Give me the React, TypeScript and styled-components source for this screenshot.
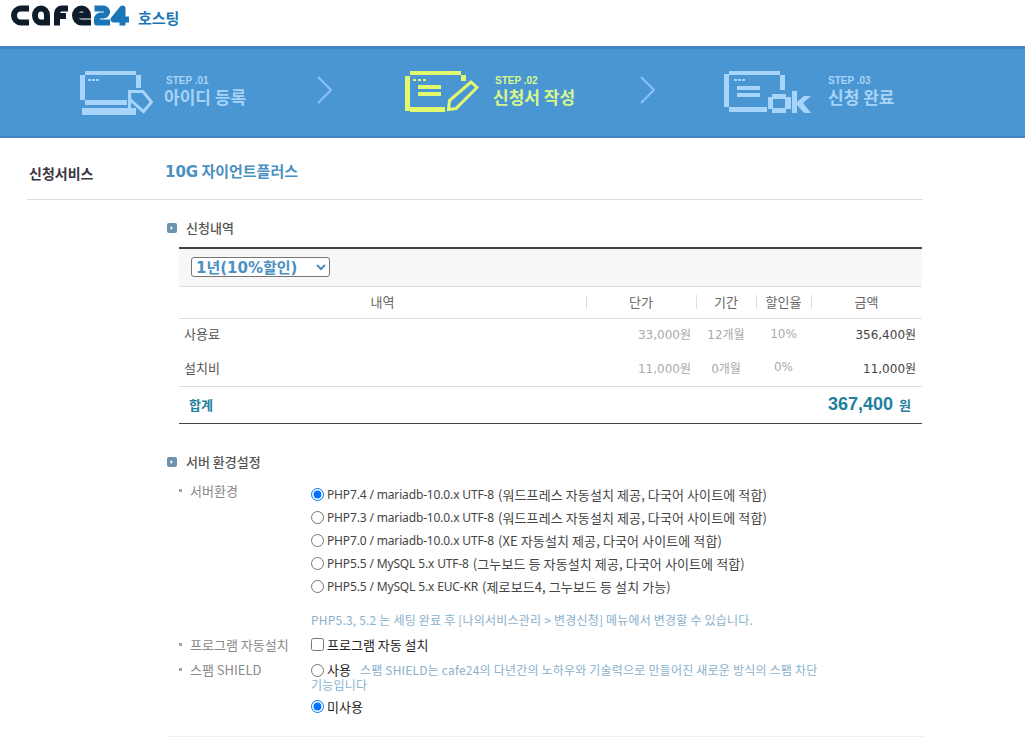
import styled, { createGlobalStyle } from "styled-components";

const KR = `"Noto Sans CJK KR", "Noto Sans", sans-serif`;
const LATIN = `"DejaVu Sans", "Noto Sans CJK KR", sans-serif`;

const GlobalStyle = createGlobalStyle`
	html, body {
		margin: 0;
		padding: 0;
		background: #fff;
		font-family: ${KR};
		font-size: 13px;
		color: #555;
	}
`;

const blueIcon = "#a6d4fb";
const limeIcon = "#e2fb6e";

const Logo = () => (
	<svg width={118} height={22} viewBox="11 5 118 22" fill="none" strokeWidth={6}>
		<g stroke="#0f1c2b">
			<path d="M29 8.500H21A7 7 0 0 0 21 22.500H29" />
			<path d="M47 25.500V15.500A6 7 0 0 0 35 15.500A6 7 0 0 0 41 22.500H47" />
			<path d="M68 8.500H62A5 5 0 0 0 57 13.500V25.500M54 16H66" />
			<path d="M75 15.500H88A6.500 7 0 0 0 75 15.500A6.500 7 0 0 0 81.500 22.500H91" />
		</g>
		<g stroke="#1a76b8" strokeLinejoin="round">
			<path d="M94.500 8.500H103.500A3.500 3.500 0 0 1 103.500 15.500H100.500A3.500 3.500 0 0 0 97 19V22.500H110" />
			<path d="M122.500 25.500V8.500L113.500 19.500H129" />
		</g>
	</svg>
);

const AccountIcon = () => (
	<svg width={73} height={44} viewBox="0 0 73 44" fill={blueIcon} shapeRendering="crispEdges">
		<rect x={5} y={0} width={51} height={4} />
		<rect x={56} y={4} width={5} height={13} />
		<rect x={0} y={4} width={5} height={25} />
		<rect x={5} y={29} width={42} height={5} />
		<rect x={2} y={37} width={54} height={7} />
		<rect x={8} y={8} width={3} height={2} />
		<rect x={12} y={8} width={3} height={2} />
		<rect x={16} y={8} width={3} height={2} />
		<path
			d="M49.500 20.500H63L71.500 31L63.500 40.500L50 28.500ZM49.500 20.500V42"
			fill="none"
			stroke={blueIcon}
			strokeWidth={3}
			shapeRendering="auto"
		/>
	</svg>
);

const FormIcon = () => (
	<svg width={74} height={42} viewBox="0 0 74 42" fill={limeIcon} shapeRendering="crispEdges">
		<rect x={5} y={0} width={51} height={4} />
		<rect x={56} y={4} width={5} height={6} />
		<rect x={0} y={5} width={5} height={35} />
		<rect x={5} y={36} width={35} height={5} />
		<rect x={8} y={8} width={3} height={2} />
		<rect x={13} y={8} width={3} height={2} />
		<rect x={18} y={8} width={3} height={2} />
		<rect x={13} y={14} width={23} height={4} />
		<rect x={13} y={21} width={23} height={4} />
		<path
			d="M43.500 38.500L44.500 29.500L66 11L72 16.500L51 37.500Z"
			fill="none"
			stroke={limeIcon}
			strokeWidth={3}
			shapeRendering="auto"
		/>
	</svg>
);

const DoneIcon = () => (
	<svg width={87} height={42} viewBox="0 0 87 42" fill={blueIcon} shapeRendering="crispEdges">
		<rect x={5} y={0} width={51} height={4} />
		<rect x={56} y={4} width={5} height={15} />
		<rect x={0} y={3} width={5} height={33} />
		<rect x={5} y={36} width={38} height={5} />
		<rect x={10} y={8} width={3} height={2} />
		<rect x={14} y={8} width={3} height={2} />
		<rect x={18} y={8} width={3} height={2} />
		<rect x={13} y={15} width={23} height={4} />
		<rect x={13} y={22} width={23} height={4} />
		<path
			fillRule="evenodd"
			d="M48 23H62V26H67V38H62V42H48V38H44V26H48ZM49 28V37H61V28Z"
		/>
		<path d="M68 20H73V31L80 25H87L79 32L87 42H80L73 34V42H68Z" shapeRendering="auto" />
	</svg>
);

const Chevron = () => (
	<svg width={15} height={28} viewBox="0 0 15 28" fill="none">
		<path d="M1 1L14 14L1 27" stroke="#86c2f6" strokeWidth={2} />
	</svg>
);

const SectionIcon = () => (
	<svg width={10} height={10} viewBox="0 0 10 10">
		<rect width={10} height={10} rx={2} fill="#6d92ad" />
		<path d="M3.500 3L6 5L3.500 7Z" fill="#fff" />
	</svg>
);

const rows = [
	{ name: "사용료", price: "33,000원", term: "12개월", rate: "10%", sum: "356,400원" },
	{ name: "설치비", price: "11,000원", term: "0개월", rate: "0%", sum: "11,000원" },
];

const servers = [
	{ spec: "PHP7.4 / mariadb-10.0.x UTF-8", note: "(워드프레스 자동설치 제공, 다국어 사이트에 적합)" },
	{ spec: "PHP7.3 / mariadb-10.0.x UTF-8", note: "(워드프레스 자동설치 제공, 다국어 사이트에 적합)" },
	{ spec: "PHP7.0 / mariadb-10.0.x UTF-8", note: "(XE 자동설치 제공, 다국어 사이트에 적합)" },
	{ spec: "PHP5.5 / MySQL 5.x UTF-8", note: "(그누보드 등 자동설치 제공, 다국어 사이트에 적합)" },
	{ spec: "PHP5.5 / MySQL 5.x EUC-KR", note: "(제로보드4, 그누보드 등 설치 가능)" },
];

export default function App() {
	return (
		<Page>
			<GlobalStyle />
			<Header>
				<Logo />
				<HostingLabel>호스팅</HostingLabel>
			</Header>

			<StepBand>
				<Step $gap={11}>
					<AccountIcon />
					<StepText>
						<StepNo>STEP .01</StepNo>
						<StepName>아이디 등록</StepName>
					</StepText>
				</Step>
				<Chevron />
				<Step $active $gap={14}>
					<FormIcon />
					<StepText>
						<StepNo>STEP .02</StepNo>
						<StepName>신청서 작성</StepName>
					</StepText>
				</Step>
				<Chevron />
				<Step $gap={17}>
					<DoneIcon />
					<StepText>
						<StepNo $flush>STEP .03</StepNo>
						<StepName>신청 완료</StepName>
					</StepText>
				</Step>
			</StepBand>

			<Main>
				<ServiceRow>
					<ServiceLabel>신청서비스</ServiceLabel>
					<ServiceName>10G 자이언트플러스</ServiceName>
				</ServiceRow>

				<Section>
					<SectionTitle>
						<SectionIcon />
						신청내역
					</SectionTitle>
					<PriceTable>
						<colgroup>
							<col width={407} />
							<col width={110} />
							<col width={60} />
							<col width={55} />
							<col width={111} />
						</colgroup>
						<thead>
							<tr>
								<SelectCell colSpan={5}>
									<TermSelect defaultValue="1y">
										<option value="1y">1년(10%할인)</option>
									</TermSelect>
								</SelectCell>
							</tr>
							<tr>
								<HeadCell $first>내역</HeadCell>
								<HeadCell>단가</HeadCell>
								<HeadCell>기간</HeadCell>
								<HeadCell>할인율</HeadCell>
								<HeadCell>금액</HeadCell>
							</tr>
						</thead>
						<tbody>
							{rows.map((row, i) => (
								<tr key={row.name}>
									<NameCell $height={i === 0 ? 33 : 35}>{row.name}</NameCell>
									<PriceCell>{row.price}</PriceCell>
									<MutedCell>{row.term}</MutedCell>
									<MutedCell>{row.rate}</MutedCell>
									<SumCell>{row.sum}</SumCell>
								</tr>
							))}
						</tbody>
						<tfoot>
							<tr>
								<TotalLabel>합계</TotalLabel>
								<TotalValue colSpan={4}>
									<TotalNumber>367,400</TotalNumber>
									<TotalUnit>원</TotalUnit>
								</TotalValue>
							</tr>
						</tfoot>
					</PriceTable>

					<SecondTitle>
						<SectionIcon />
						서버 환경설정
					</SecondTitle>

					<FormRow>
						<FieldLabel>서버환경</FieldLabel>
						<div>
							{servers.map((server, i) => (
								<ServerOption key={server.spec + server.note}>
									<Radio name="server" defaultChecked={i === 0} />
									<ServerSpec>{server.spec}</ServerSpec>
									<ServerNote>{server.note}</ServerNote>
								</ServerOption>
							))}
							<ServerHint>
								PHP5.3, 5.2 는 세팅 완료 후 [나의서비스관리 &gt; 변경신청] 메뉴에서 변경할 수 있습니다.
							</ServerHint>
						</div>
					</FormRow>

					<ProgramRow>
						<FieldLabel>프로그램 자동설치</FieldLabel>
						<ProgramOption>
							<CheckBox />
							프로그램 자동 설치
						</ProgramOption>
					</ProgramRow>

					<ShieldRow>
						<FieldLabel>스팸 SHIELD</FieldLabel>
						<div>
							<ShieldText>
								<Radio name="shield" />
								<ShieldUse>사용</ShieldUse>
								<ShieldHint>
									스팸 SHIELD는 cafe24의 다년간의 노하우와 기술력으로 만들어진 새로운 방식의 스팸 차단 기능입니다
								</ShieldHint>
							</ShieldText>
							<ShieldOff>
								<Radio name="shield" defaultChecked />
								미사용
							</ShieldOff>
						</div>
					</ShieldRow>

					<BottomRule />
				</Section>
			</Main>
		</Page>
	);
}

const Page = styled.div`
	width: 1025px;
	overflow: hidden;
`;

const Header = styled.header`
	height: 46px;
	box-sizing: border-box;
	padding: 5px 0 0 11px;
	display: flex;
	align-items: flex-start;
	gap: 9px;
`;

const HostingLabel = styled.span`
	margin-top: 3px;
	font-size: 15px;
	line-height: 20px;
	font-weight: 700;
	color: #1a76b8;
`;

const StepBand = styled.section`
	height: 92px;
	box-sizing: border-box;
	background: #4a96d2;
	border-top: 3px solid #4084c0;
	border-bottom: 2px solid #4084c0;
	padding: 22px 0 0 80px;
	display: grid;
	grid-template-columns: 237px 88px 235px 84px auto;
	align-items: start;

	& > svg {
		margin-top: 5px;
	}
`;

const Step = styled.div<{ $active?: boolean; $gap: number }>`
	display: flex;
	align-items: flex-start;
	gap: ${({ $gap }) => $gap}px;
	color: ${({ $active }) => ($active ? "#d9f68c" : "#a6d3f8")};
`;

const StepText = styled.div`
	padding-top: 4px;
`;

const StepNo = styled.div<{ $flush?: boolean }>`
	padding-left: ${({ $flush }) => ($flush ? 0 : 2)}px;
	font-family: "Liberation Sans", sans-serif;
	font-size: 10px;
	font-weight: 700;
	line-height: 12px;
`;

const StepName = styled.div`
	margin-top: -1px;
	font-size: 17px;
	font-weight: 700;
	line-height: 22px;
	white-space: nowrap;
`;

const Main = styled.main`
	width: 896px;
	margin-left: 27px;
`;

const ServiceRow = styled.div`
	height: 62px;
	box-sizing: border-box;
	padding: 25px 0 0 2px;
	border-bottom: 1px solid #ddd;
	display: grid;
	grid-template-columns: 136px auto;
`;

const ServiceLabel = styled.div`
	font-size: 14px;
	font-weight: 700;
	line-height: 20px;
	color: #3b3542;
`;

const ServiceName = styled.div`
	margin-top: -1px;
	font-family: ${LATIN};
	font-size: 15px;
	font-weight: 700;
	line-height: 20px;
	word-spacing: -2px;
	color: #4a90c2;
`;

const Section = styled.div`
	margin-left: 140px;
`;

const SectionTitle = styled.h3`
	margin: 0 0 11px;
	padding-top: 20px;
	display: flex;
	align-items: center;
	gap: 9px;
	font-size: 13px;
	font-weight: 500;
	line-height: 16px;
	color: #555;
`;

const SecondTitle = styled(SectionTitle)`
	margin: 0;
	padding-top: 30px;
`;

const PriceTable = styled.table`
	width: 743px;
	margin-left: 12px;
	table-layout: fixed;
	border-collapse: collapse;
	border-top: 2px solid #444;
	border-bottom: 1px solid #444;

	th,
	td {
		box-sizing: border-box;
	}
`;

const SelectCell = styled.th`
	height: 38px;
	padding: 0 0 0 12px;
	background: #f7f7f7;
	border-bottom: 1px solid #ddd;
	text-align: left;
`;

const TermSelect = styled.select`
	display: block;
	width: 139px;
	height: 20px;
	padding: 0;
	font-family: ${LATIN};
	font-size: 15px;
	font-weight: 700;
	color: #4a90c2;
	background: #fff;
	border: 1px solid #767676;
	border-radius: 3px;
`;

const HeadCell = styled.th<{ $first?: boolean }>`
	height: 32px;
	padding: 0 0 2px;
	border-bottom: 1px solid #ddd;
	font-size: 13px;
	font-weight: 400;
	color: #666;
	background: ${({ $first }) =>
		$first ? "none" : "linear-gradient(#ddd, #ddd) left center / 1px 14px no-repeat"};
`;

const NameCell = styled.td<{ $height: number }>`
	height: ${({ $height }) => $height}px;
	padding: 0 0 2px 5px;
	color: #555;
`;

const MutedCell = styled.td`
	padding: 0 0 2px;
	font-family: ${LATIN};
	font-size: 12px;
	text-align: center;
	color: #aaa;
`;

const PriceCell = styled(MutedCell)`
	padding-right: 5px;
	text-align: right;
`;

const SumCell = styled(MutedCell)`
	padding-right: 6px;
	text-align: right;
	color: #444;
`;

const TotalLabel = styled.td`
	height: 37px;
	padding: 0 0 0 10px;
	border-top: 1px solid #ddd;
	font-weight: 700;
	color: #1f7f9c;
`;

const TotalValue = styled.td`
	padding: 0 11px 0 0;
	border-top: 1px solid #ddd;
	text-align: right;
	color: #1f7f9c;
	font-weight: 700;
`;

const TotalNumber = styled.span`
	font-family: "Liberation Sans", sans-serif;
	font-size: 18px;
`;

const TotalUnit = styled.span`
	margin-left: 6px;
	font-size: 13px;
`;

const FormRow = styled.div`
	margin-top: 13px;
	padding-left: 12px;
	display: grid;
	grid-template-columns: 132px auto;
`;

const FieldLabel = styled.div`
	position: relative;
	padding-left: 11px;
	line-height: 16px;
	color: #888;

	&::before {
		content: "";
		position: absolute;
		left: 0;
		top: 6px;
		width: 3px;
		height: 3px;
		background: #9aa6ad;
	}
`;

const ServerOption = styled.label`
	height: 23px;
	display: flex;
	align-items: center;
	gap: 3px;
	color: #444;
	white-space: nowrap;
`;

const ServerSpec = styled.span`
	margin-right: 1px;
	font-family: "Noto Sans", sans-serif;
	font-size: 12px;
	letter-spacing: -0.15px;
`;

const ServerNote = styled.span`
	letter-spacing: 0.1px;
`;

const Radio = styled.input.attrs({ type: "radio" })`
	width: 13px;
	height: 13px;
	margin: 0;
	flex: none;
`;

const CheckBox = styled.input.attrs({ type: "checkbox" })`
	width: 13px;
	height: 13px;
	margin: 0;
	flex: none;
`;

const ServerHint = styled.p`
	margin: 13px 0 0;
	font-size: 12px;
	letter-spacing: 0.2px;
	line-height: 18px;
	color: #8ab0cc;
	white-space: nowrap;
`;

const ProgramRow = styled(FormRow)`
	margin-top: 8px;
`;

const ProgramOption = styled.label`
	display: flex;
	align-items: center;
	gap: 3px;
	height: 16px;
	color: #222;
`;

const ShieldRow = styled(FormRow)`
	margin-top: 9px;
`;

const ShieldText = styled.div`
	width: 512px;
	line-height: 15px;

	& > input {
		vertical-align: -2px;
	}
`;

const ShieldUse = styled.span`
	margin: 0 9px 0 3px;
	color: #222;
`;

const ShieldHint = styled.span`
	font-size: 12px;
	letter-spacing: 0.2px;
	color: #8ab0cc;
`;

const ShieldOff = styled.label`
	margin-top: 7px;
	display: flex;
	align-items: center;
	gap: 3px;
	height: 16px;
	color: #222;
`;

const BottomRule = styled.div`
	height: 1px;
	margin-top: 21px;
	background: #eee;
`;
